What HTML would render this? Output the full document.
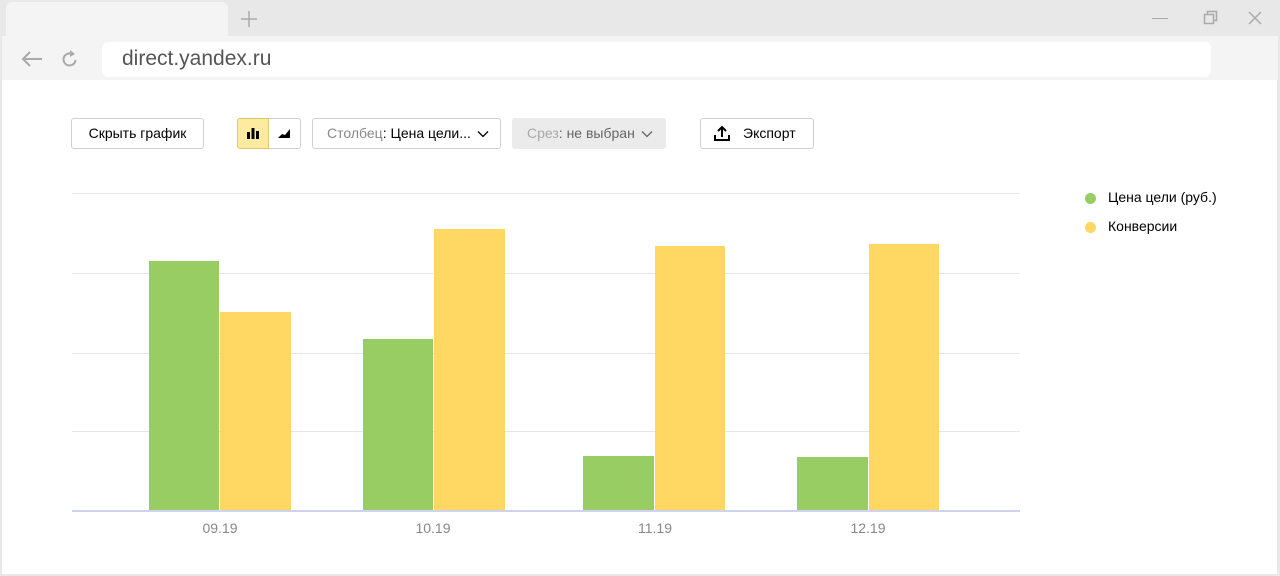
<!DOCTYPE html><html><head><meta charset="utf-8"><style>
*{margin:0;padding:0;box-sizing:border-box}
body{width:1280px;height:576px;background:#e8e8e8;font-family:"Liberation Sans",sans-serif;position:relative;overflow:hidden}
.a{position:absolute}
.btn{position:absolute;top:118px;height:31px;border:1px solid #d0d0d0;border-radius:3px;background:#fff;font-size:14px;color:#000;line-height:29px}
.grid{position:absolute;left:72px;width:948px;height:1px;background:#e6e6e6}
.g{position:absolute;background:#98cd63}
.y{position:absolute;background:#ffd762}
.lbl{position:absolute;top:520px;width:60px;text-align:center;font-size:14px;color:#888}
</style></head><body>
<div class="a" style="left:6px;top:2px;width:222px;height:36px;background:#f4f4f4;border-radius:6px 6px 0 0"></div>
<svg class="a" style="left:240px;top:10px" width="18" height="18"><path d="M9 1v16M1 9h16" stroke="#aaa" stroke-width="1.5"/></svg>
<div class="a" style="left:1152px;top:18px;width:16px;height:1px;background:#aaa"></div>
<svg class="a" style="left:1203px;top:10px" width="16" height="16"><path d="M4.5 4.5V1.5h9v9h-3M1.5 4.5h9v9h-9z" stroke="#aaa" stroke-width="1.5" fill="none"/></svg>
<svg class="a" style="left:1248px;top:11px" width="14" height="14"><path d="M1 1l12 12M13 1L1 13" stroke="#aaa" stroke-width="1.5"/></svg>
<div class="a" style="left:2px;top:36px;width:1276px;height:44px;background:#f4f4f4"></div>
<svg class="a" style="left:21px;top:50px" width="22" height="18"><path d="M2 9h19M9 2L2 9l7 7" stroke="#aaa" stroke-width="2" fill="none"/></svg>
<svg class="a" style="left:61px;top:49px" width="18" height="20"><path d="M14.5 11A6 6 0 1 1 11 5" stroke="#aaa" stroke-width="2" fill="none"/><path d="M9 1l5 4-5 3z" fill="#aaa"/></svg>
<div class="a" style="left:102px;top:42px;width:1109px;height:35px;background:#fff;border-radius:6px"></div>
<div class="a" style="left:122px;top:47px;font-size:21px;color:#555">direct.yandex.ru</div>
<div class="a" style="left:2px;top:80px;width:1275px;height:494px;background:#fff"></div>
<div class="btn" style="left:71px;width:133px;text-align:center">Скрыть график</div>
<div class="btn" style="left:237px;width:64px"></div>
<div class="a" style="left:237px;top:118px;width:32px;height:31px;background:#ffeba0;border:1px solid #e0c870;border-radius:3px 0 0 3px"></div>
<svg class="a" style="left:246px;top:126px" width="14" height="14"><path d="M1 6h3v7H1zM5.5 2h3v11h-3zM10 5h3v8h-3z" fill="#000"/></svg>
<svg class="a" style="left:277px;top:126px" width="14" height="13"><path d="M1 12 L5 8 L8 9 L13 3 L13 12Z" fill="#000"/></svg>
<div class="btn" style="left:312px;width:189px;padding-left:14px"><span style="color:#888">Столбец</span>: Цена цели...</div>
<svg class="a" style="left:477px;top:130px" width="12" height="8"><path d="M1 1.5l5 5 5-5" stroke="#000" stroke-width="1.3" fill="none"/></svg>
<div class="btn" style="left:512px;width:154px;padding-left:14px;background:#ebebeb;border-color:#ebebeb;color:#666"><span style="color:#aaa">Срез</span>: не выбран</div>
<svg class="a" style="left:641px;top:130px" width="12" height="8"><path d="M1 1.5l5 5 5-5" stroke="#666" stroke-width="1.3" fill="none"/></svg>
<div class="btn" style="left:700px;width:114px;padding-left:42px">Экспорт</div>
<svg class="a" style="left:713px;top:124px" width="18" height="18"><path d="M9 13V3M5 7l4-4 4 4M2 11v5h14v-5" stroke="#000" stroke-width="2" fill="none"/></svg>
<div class="grid" style="top:193px"></div><div class="grid" style="top:273px"></div><div class="grid" style="top:353px"></div><div class="grid" style="top:431px"></div>
<div class="grid" style="top:510px;background:#cfd3ee;height:2px"></div>
<div class="g" style="left:149px;top:261px;width:70px;height:249px"></div>
<div class="y" style="left:220px;top:312px;width:71px;height:198px"></div>
<div class="g" style="left:363px;top:339px;width:70px;height:171px"></div>
<div class="y" style="left:434px;top:229px;width:71px;height:281px"></div>
<div class="g" style="left:583px;top:456px;width:71px;height:54px"></div>
<div class="y" style="left:655px;top:246px;width:70px;height:264px"></div>
<div class="g" style="left:797px;top:457px;width:71px;height:53px"></div>
<div class="y" style="left:869px;top:244px;width:70px;height:266px"></div>
<div class="lbl" style="left:190px">09.19</div><div class="lbl" style="left:403px">10.19</div><div class="lbl" style="left:625px">11.19</div><div class="lbl" style="left:838px">12.19</div>
<div class="a" style="left:1085px;top:193px;width:11px;height:11px;border-radius:50%;background:#98cd63"></div>
<div class="a" style="left:1108px;top:189px;font-size:14px">Цена цели (руб.)</div>
<div class="a" style="left:1085px;top:222px;width:11px;height:11px;border-radius:50%;background:#ffd762"></div>
<div class="a" style="left:1108px;top:218px;font-size:14px">Конверсии</div>
</body></html>
